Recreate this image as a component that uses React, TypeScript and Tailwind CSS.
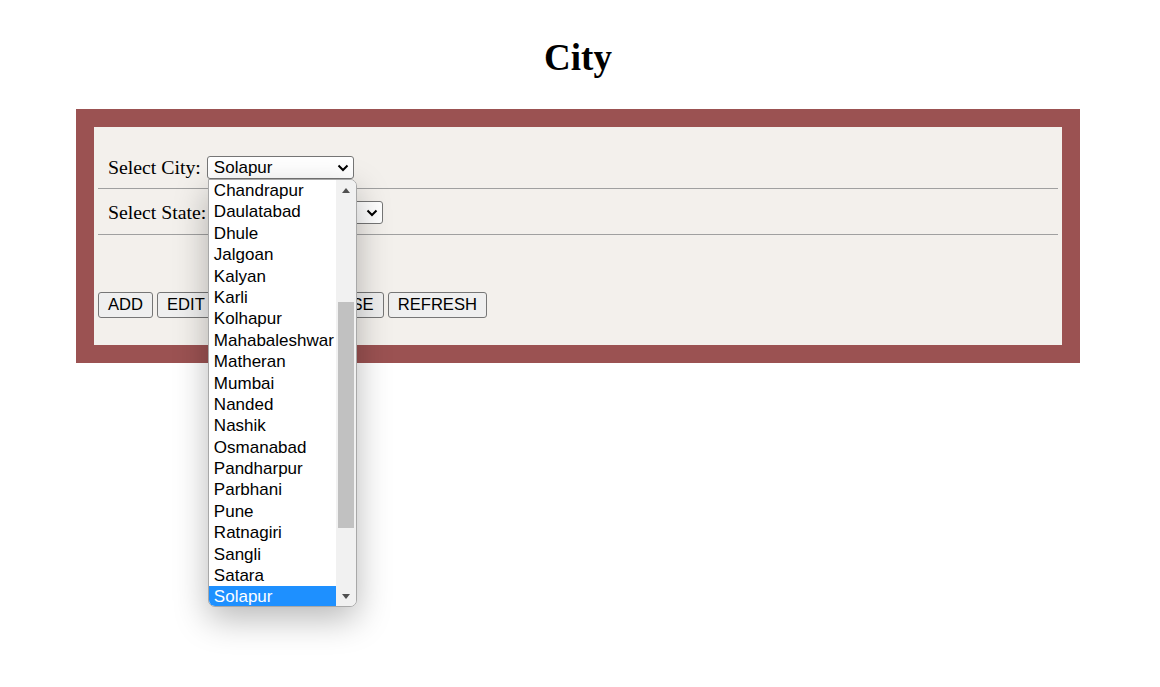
import React from "react"

const cities = [
  "Chandrapur",
  "Daulatabad",
  "Dhule",
  "Jalgoan",
  "Kalyan",
  "Karli",
  "Kolhapur",
  "Mahabaleshwar",
  "Matheran",
  "Mumbai",
  "Nanded",
  "Nashik",
  "Osmanabad",
  "Pandharpur",
  "Parbhani",
  "Pune",
  "Ratnagiri",
  "Sangli",
  "Satara",
  "Solapur",
]

function Chevron() {
  return (
    <svg width="12" height="8" viewBox="0 0 12 8" className="shrink-0">
      <path d="M1.5 1.5 L6 6 L10.5 1.5" fill="none" stroke="#000" strokeWidth="2" />
    </svg>
  )
}

function CityDropdown() {
  return (
    <div className="absolute left-px top-full z-10 flex h-[428px] w-[149px] overflow-hidden rounded-b-[7px] rounded-tr-[7px] border border-[#a8a8a8] bg-white shadow-[0_12px_34px_rgba(0,0,0,0.28)]">
      <ul className="flex-1 font-['Liberation_Sans',Arial,sans-serif] text-[17px] leading-[21.4px] text-black">
        {cities.map((c) => (
          <li
            key={c}
            className={
              c === "Solapur"
                ? "h-[21.4px] whitespace-nowrap bg-[#1e90ff] pl-[5px] text-white"
                : "h-[21.4px] whitespace-nowrap pl-[5px]"
            }
          >
            {c}
          </li>
        ))}
      </ul>
      {/* scrollbar */}
      <div className="flex w-[20px] flex-col items-center bg-[#f1f1f1]">
        <div className="flex h-[20px] items-center justify-center">
          <div className="h-0 w-0 border-x-[4.5px] border-b-[5px] border-x-transparent border-b-[#505050]" />
        </div>
        <div className="mt-[102px] h-[226px] w-[16px] bg-[#c1c1c1]" />
        <div className="flex-1" />
        <div className="flex h-[20px] items-center justify-center">
          <div className="h-0 w-0 border-x-[4.5px] border-t-[5px] border-x-transparent border-t-[#505050]" />
        </div>
      </div>
    </div>
  )
}

function Btn({ label }: { label: string }) {
  return (
    <button className="h-[26px] rounded-[3px] border border-[#767676] bg-[#efefef] px-[9px] font-['Liberation_Sans',Arial,sans-serif] text-[16.6px] leading-none text-black">
      {label}
    </button>
  )
}

export default function App() {
  return (
    <div className="min-h-screen bg-white font-['Liberation_Serif','Times_New_Roman',serif] text-black">
      <div className="ml-[76px] w-[1004px]">
        <h1 className="pt-[37px] text-center text-[37px] font-bold leading-[42px]">City</h1>

        <div className="mt-[30px] border-[18px] border-[#9b5252] bg-[#f3f0ec] px-[4px] pb-[27px]">
          <div className="mt-[29px] flex items-center pl-[10px] text-[19.8px] leading-[23px]">
            <span className="mr-[6px]">Select City:</span>
            <div className="relative">
              <div className="flex h-[23px] w-[147px] items-center justify-between rounded-[3px] border border-[#767676] bg-white pl-[6px] pr-[4px] font-['Liberation_Sans',Arial,sans-serif] text-[17px]">
                <span>Solapur</span>
                <Chevron />
              </div>
              <CityDropdown />
            </div>
          </div>
          <hr className="mt-[9px] border-t border-[#a0a0a0]" />

          <div className="mt-[12px] flex items-center pl-[10px] text-[19.8px] leading-[23px]">
            <span className="mr-[6px]">Select State:</span>
            <div className="flex h-[23px] w-[171px] items-center justify-end rounded-[3px] border border-[#767676] bg-white pr-[4px] font-['Liberation_Sans',Arial,sans-serif] text-[17px]">
              <Chevron />
            </div>
          </div>
          <hr className="mt-[10px] border-t border-[#a0a0a0]" />

          <div className="mt-[57px] flex gap-[4px]">
            <Btn label="ADD" />
            <Btn label="EDIT" />
            <Btn label="DELETE" />
            <Btn label="CLOSE" />
            <Btn label="REFRESH" />
          </div>
        </div>
      </div>
    </div>
  )
}
